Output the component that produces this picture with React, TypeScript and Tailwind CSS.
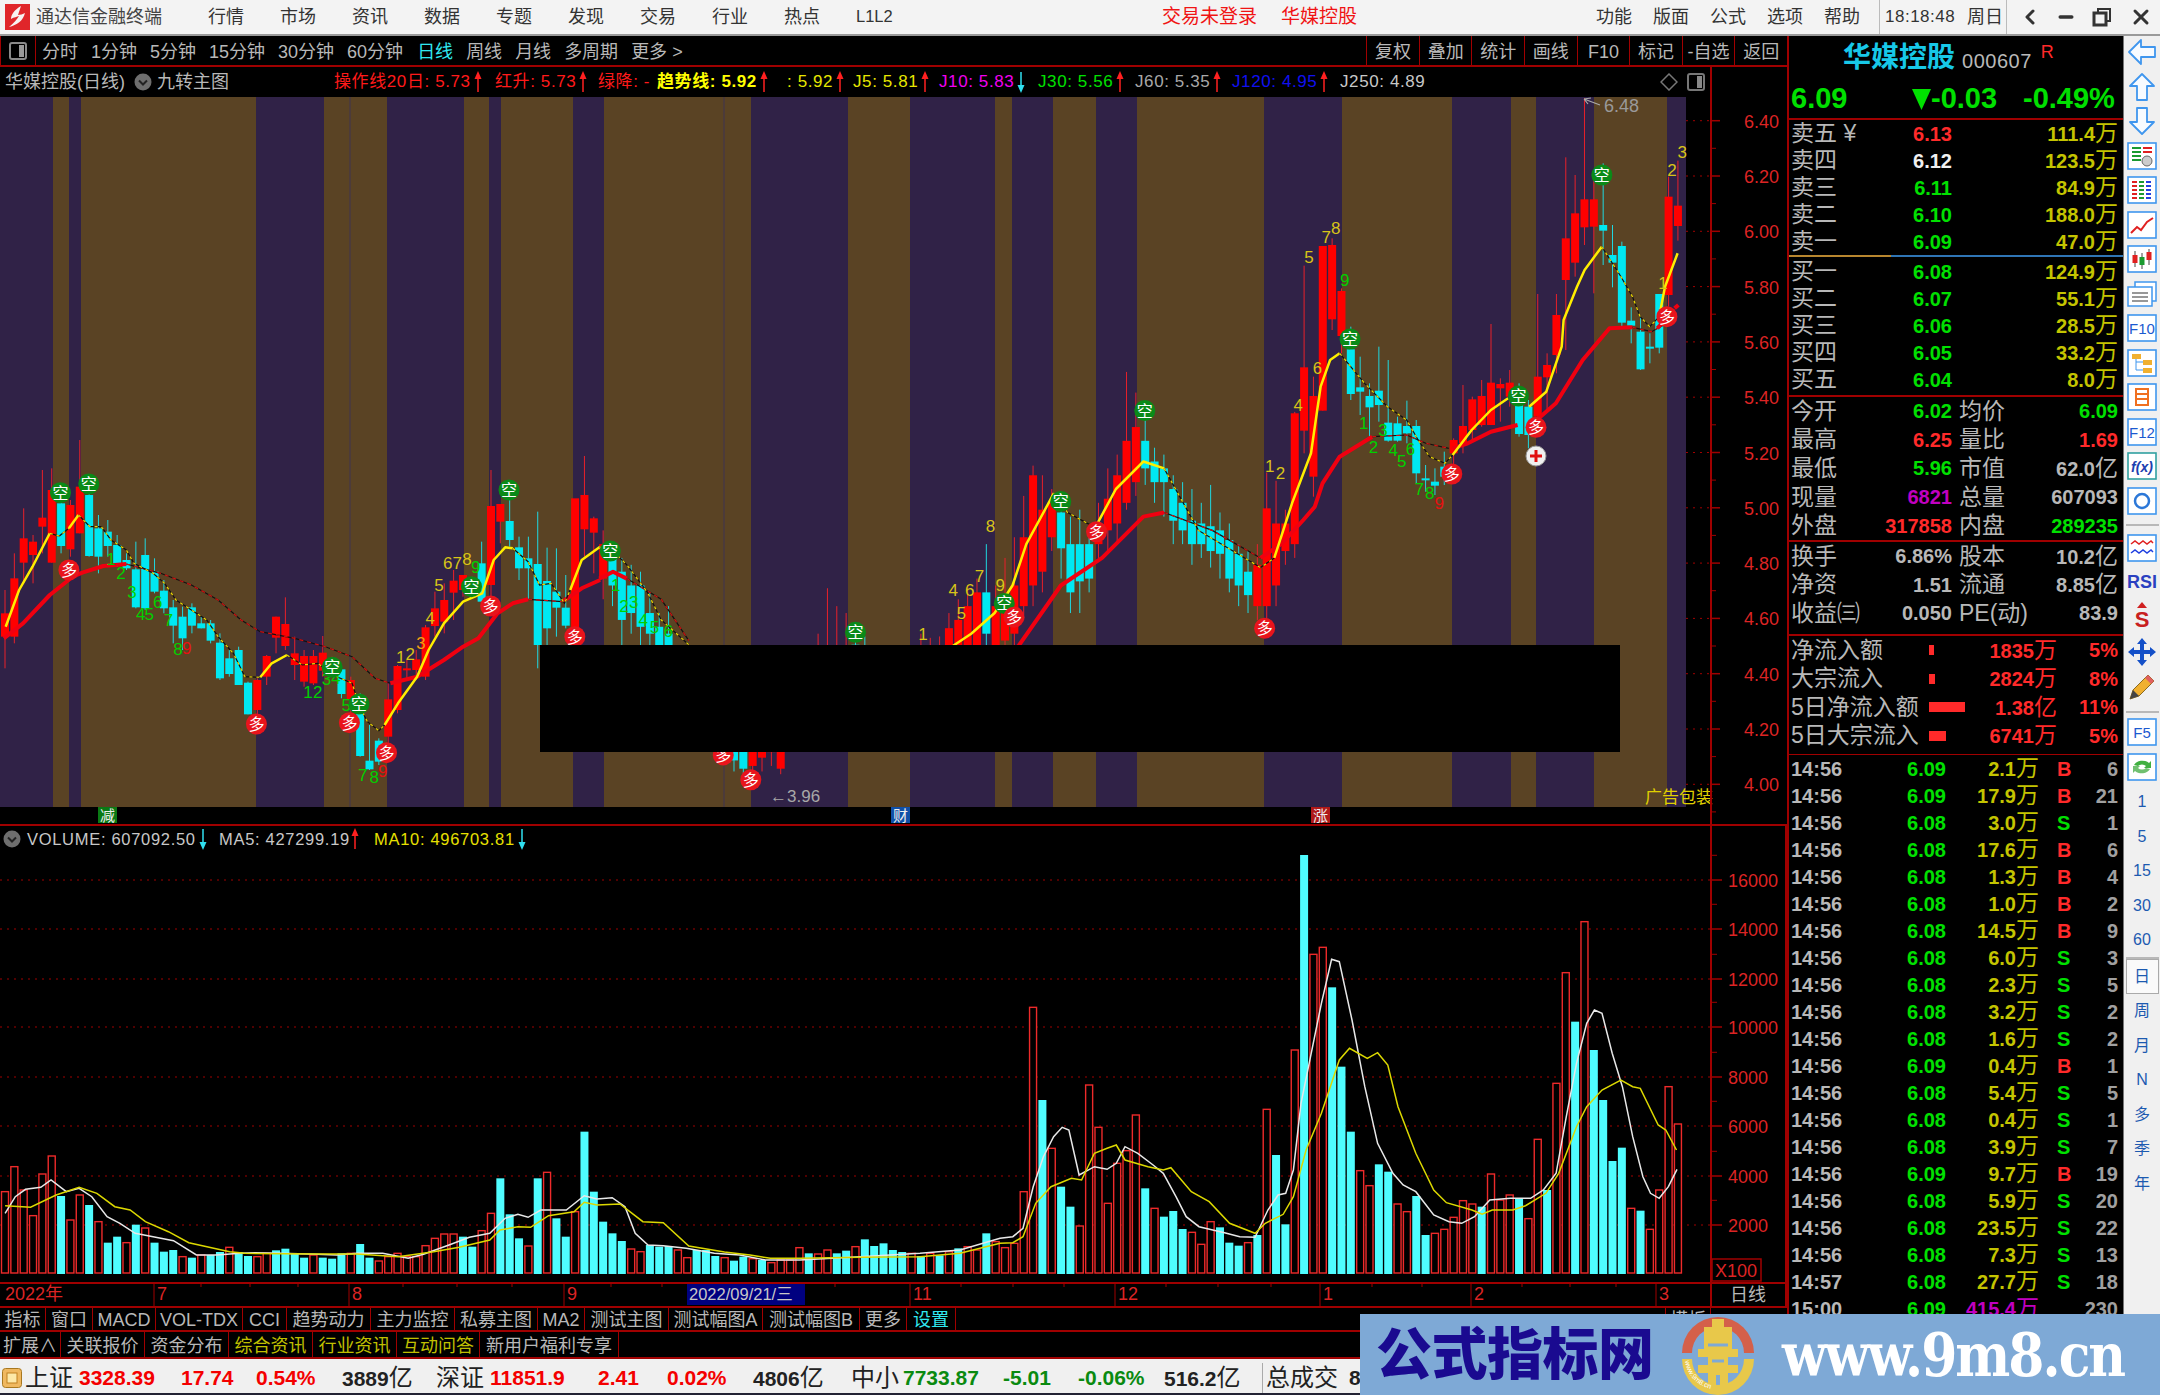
import { ChevronLeft, Minus, X } from "lucide-react";

const RED_LINE = "#a00000";

// chart readings, page pixels come from the helpers below
type Pt = [number, number];
const z8 = (pts: number[][]): Pt[] => pts.map(([x, p]) => [x / 2.613, 420 + p / 3]);
const z9 = (pts: number[][]): Pt[] => pts.map(([x, p]) => [1200 + x / 2.613, 120 + p / 3]);
const sm = (pts: number[][]): Pt[] => pts.map(([x, y]) => [x * 1.3776, y * 1.3776]);
const v12 = (pts: number[][]): Pt[] => pts.map(([x, p]) => [x / 1.96, 820 + p / 3]);
const v10 = (pts: number[][]): Pt[] => pts.map(([x, p]) => [1000 + x / 1.96, 820 + p / 3]);
const real = (pts: number[][]): Pt[] => pts.map(([x, p]) => [x, 820 + p / 3]);
const toPoints = (pts: Pt[]) => pts.map(([x, y]) => `${x.toFixed(1)},${y.toFixed(1)}`).join(" ");

const barX = (i: number) => 5 + 9.346 * i;
const priceY = (p: number) => 120.7 + (6.4 - p) * 276.5;

const BANDS: [number, number, boolean][] = [
  [0, 53, true], [53, 69, false], [69, 81, true], [81, 256, false], [256, 324, true], [324, 387, false],
  [387, 464, true], [464, 489, false], [489, 501, true], [501, 573, false], [573, 604, true], [604, 751, false],
  [751, 848, true], [848, 910, false], [910, 995, true], [995, 1012, false], [1012, 1053, true], [1053, 1096, false],
  [1096, 1137, true], [1137, 1264, false], [1264, 1342, true], [1342, 1452, false], [1452, 1511, true],
  [1511, 1536, false], [1536, 1594, true], [1594, 1667, false], [1667, 1686, true],
];

const CANDLES_A =
  "r510,580,650,745 r400,475,650,670 r265,355,428,490 r345,365,405,490 r150,293,320,400 r145,210,428,428 c190,250,378,400 r240,255,388,410 r60,200,340,340 c165,225,408,410 " +
  "c285,325,410,460 c300,335,378,410 c345,375,430,440 c400,420,445,450 c365,448,562,565 c355,405,565,570 c415,455,515,520 c480,512,565,580 c540,562,617,670 c560,590,655,690 " +
  "c550,562,617,640 c590,610,625,625 c600,610,662,670 c640,668,775,780 c690,715,762,770 c680,690,795,795 c785,788,883,883 r775,780,870,885 r705,708,770,795 r590,590,653,700 " +
  "r532,612,678,690 r650,700,735,780 r690,708,785,800 r690,708,790,795 r648,698,752,770 r710,745,760,770 c745,748,822,835 r770,780,840,880 c820,825,1008,1010 c915,1022,1048,1050 " +
  "c955,962,1025,1035 r790,838,950,970 r735,738,870,880 r720,745,750,775 r690,718,750,780 r615,622,770,780 r515,565,618,650 r490,540,605,640 r450,482,518,600 r465,465,510,530 " +
  "r470,480,510,530 c365,430,545,560 r150,258,495,540 r252,252,305,370 c180,303,360,380 c350,382,445,480 c350,415,445,540 c275,432,675,745 c383,483,625,680 c385,515,563,650 " +
  "c465,563,617,625 r300,235,640,650 r108,225,328,410 r290,295,338,460";
const CANDLES_M =
  "r385,395,420,435 c395,405,425,440 c405,415,450,470 c410,425,445,460 c415,425,455,470 c430,445,460,480 c445,455,475,490 c440,460,490,500 c470,480,500,510 c480,490,510,520 " +
  "c490,500,520,530 c495,505,530,540 r500,510,535,545 c500,520,550,555 c510,530,552,560 c515,535,558,568 r520,530,556,560 r520,532,550,560 r518,530,546,556 r510,525,558,562 " +
  "r490,510,530,540 r480,495,520,530 r470,480,510,520 r460,475,500,510 r427,470,495,505 r440,472,500,510 r445,472,490,500 c455,468,490,500 c462,475,500,510 c470,480,505,515 " +
  "c470,485,510,520 r470,490,510,520 c470,490,515,525 c470,495,520,530 r460,475,505,515 r463,475,500,510 r462,470,495,505 r445,456,482,490 r435,450,475,485 r425,440,480,490 " +
  "r420,430,470,480 c395,430,460,470 r425,440,470,480 r405,445,465,475 r390,425,460,470 r360,390,440,450 r338,345,425,440 r345,370,415,430 r355,365,390,400 c360,372,398,420 " +
  "c375,395,430,445 c370,395,422,445 c385,395,420,430 r365,380,395,405 r340,362,385,400 r330,345,380,395 r270,320,365,370 r285,310,350,360 c295,320,340,352 c325,335,350,365 " +
  "c330,340,350,375 c345,355,378,395 c350,365,385,395 c355,378,395,410 c365,380,395,405 c352,382,400,412 c372,385,402,420 c380,392,420,430 c395,402,425,440 c400,415,432,445 " +
  "r395,410,440,450 r343,369,440,456 r349,380,425,440 r370,380,400,410 r299,300,395,405";
const CANDLES_Z =
  "r437,742,932,1000 r770,828,1070,1130 r378,378,872,872 r355,375,598,630 r505,513,648,700 c620,688,822,840 c710,802,815,885 c790,828,862,950 c680,812,855,905 c720,908,962,965 " +
  "c890,910,962,965 c842,918,940,970 c900,918,1060,1090 c1035,1075,1080,1115 c1045,1085,1097,1125 c995,1040,1070,1095 r955,960,1000,1040 r795,918,970,1000 r830,838,930,960 r780,828,915,920 " +
  "r612,788,915,915 r775,792,805,905 r750,788,830,860 c790,838,942,950 c840,860,945,985 r522,770,890,900 r700,735,772,870 r522,585,705,760 r112,355,480,690 r165,280,428,470 " +
  "r-66,238,322,375 r180,238,320,520 c130,315,332,435 c315,405,428,502 c365,378,608,620 c562,602,617,670 c590,635,748,750 c640,680,685,730 c522,522,683,700 r170,230,525,560 r122,257,318,362";

const parseCandles = (src: string, conv: (v: number) => number) =>
  src.split(" ").map((t) => {
    const [h, o, c, l] = t.slice(1).split(",").map(Number);
    return { up: t[0] === "r", h: conv(h), t: conv(o), b: conv(c), l: conv(l) };
  });
const CANDLES = [
  ...parseCandles(CANDLES_A, (p) => 420 + p / 3),
  ...parseCandles(CANDLES_M, (s) => s * 1.3776),
  ...parseCandles(CANDLES_Z, (p) => 120 + p / 3),
];

const VOLS = (
  "r1115 r1040 r1110 r1187 r1062 r1008 c1128 r1200 r1125 c1155 r1205 c1268 c1250 r1268 c1214 r1224 c1268 c1295 c1290 r1310 " +
  "c1313 r1305 c1305 c1296 r1282 c1296 c1308 r1310 r1300 c1291 c1286 c1300 c1313 r1305 c1313 c1316 c1300 r1300 c1272 c1313 " +
  "r1323 r1310 r1300 r1310 r1310 r1277 r1255 r1242 r1242 c1250 c1280 r1232 r1180 c1075 c1183 c1255 r1278 c1075 r1057 c1195 " +
  "c1250 r1175 c935 c1115 c1205 c1240 c1263 r1287 r1295 c1275 c1280 c1278 r1290 r1313 c1290 c1290 c1308 r1313 c1322 c1310 " +
  "r1316 c1320 r1328 r1320 r1320 r1283 " +
  "c1300 r1302 r1290 c1300 c1292 r1280 c1258 c1278 c1270 c1290 c1296 r1300 c1308 r1300 c1306 r1295 c1285 r1280 r1290 c1240 r1265 " +
  "r1283 r1270 r1115 r562 c840 r985 c1100 c1160 r1218 r795 r922 r1150 r1030 r992 r885 c1105 r1165 c1190 c1173 c1227 " +
  "r1237 r1273 r1205 c1222 c1268 c1277 r1268 c1245 r868 c1005 c1213 r690 c105 r403 r382 c502 c740 c935 r1052 r1097 " +
  "c1033 c1055 r1152 r1175 c1128 c1245 r1240 r1228 r1192 r1142 r1152 c1160 r1062 r1140 r1125 c1135 r1196 r958 c1110 r790 " +
  "r458 c605 r305 c690 c840 c1023 c983 r1165 c1172 r1228 r1110 r800 r912"
).split(" ");

const WHITE: Pt[] = [
  ...v12([[10,1180],[30,1130],[50,1108],[80,1102],[100,1080],[130,1115],[155,1105],[180,1130],[210,1190],[235,1210],[265,1240],[300,1250],[340,1262],[385,1305],[425,1305],[470,1300],[500,1298],[550,1300],[620,1303],[660,1305],[700,1300],[750,1300],[800,1315],[830,1303],[880,1275],[920,1252],[960,1240],[990,1195],[1015,1183],[1035,1192],[1060,1170],[1110,1170],[1145,1127],[1170,1137],[1200,1133],[1225,1160],[1245,1240],[1270,1275],[1300,1277],[1345,1285],[1400,1300],[1450,1305],[1500,1320],[1568,1320]]),
  ...real([[860,1310],[920,1300],[960,1290]]),
  ...v10([[0,1255],[25,1250],[45,1225],[65,1100],[85,1010],[105,950],[122,922],[135,930],[155,1065],[185,1040],[210,1048],[228,1030],[245,980],[270,1000],[300,1035],[320,1060],[345,1130],[365,1190],[390,1220],[440,1238],[470,1250],[500,1252],[525,1170],[545,1125],[560,1120],[575,1050],[590,850],[610,700],[630,550],[650,418],[665,425],[690,600],[715,800],[740,970],[770,1060],[790,1095],[815,1115],[850,1185],[880,1205],[905,1210],[930,1190],[960,1140],[1000,1135],[1040,1135],[1065,1110],[1090,1060],[1110,890],[1130,730],[1150,610],[1165,570],[1180,580],[1200,700],[1220,800],[1240,950],[1260,1070],[1275,1120],[1292,1135],[1310,1100],[1327,1048]]),
];
const YELLOW_VOL: Pt[] = [
  ...v12([[10,1157],[60,1162],[110,1125],[155,1102],[190,1120],[225,1160],[255,1170],[285,1205],[330,1235],[370,1268],[410,1282],[450,1295],[480,1300],[620,1302],[700,1302],[780,1310],[850,1295],[900,1282],[960,1260],[980,1230],[1015,1220],[1040,1222],[1075,1187],[1125,1175],[1145,1147],[1170,1155],[1215,1152],[1260,1205],[1300,1208],[1350,1278],[1420,1296],[1470,1305],[1510,1315],[1568,1315]]),
  ...real([[860,1312],[920,1310],[960,1300]]),
  ...v10([[0,1270],[25,1268],[45,1250],[70,1150],[100,1100],[140,1075],[160,1080],[185,1000],[210,985],[228,975],[245,1020],[290,1040],[320,1050],[335,1043],[375,1115],[410,1145],[450,1210],[500,1240],[520,1210],[555,1183],[575,1130],[600,990],[630,880],[665,720],[685,685],[720,715],[740,698],[760,735],[780,860],[815,1000],[850,1110],[875,1148],[925,1170],[945,1183],[965,1170],[1005,1170],[1030,1157],[1070,1120],[1095,1060],[1130,920],[1150,860],[1180,810],[1217,780],[1240,800],[1255,805],[1290,915],[1305,930],[1326,990]]),
];

const MA_YELLOW: { pts: Pt[]; solid: boolean }[] = [
  { solid: true, pts: z8([[15,620],[50,510],[85,440],[130,340]]) },
  { solid: false, pts: z8([[130,340],[155,348],[180,325]]) },
  { solid: true, pts: z8([[180,325],[205,285]]) },
  { solid: false, pts: z8([[205,285],[235,320],[265,320],[290,360],[330,390],[350,430],[400,460],[430,490],[460,540],[500,570],[540,600],[570,650],[610,700],[640,770],[680,772]]) },
  { solid: true, pts: z8([[680,772],[710,730],[750,705]]) },
  { solid: false, pts: z8([[750,705],[790,735],[830,730],[880,770],[920,790],[940,860],[960,905],[990,932],[1005,915]]) },
  { solid: true, pts: z8([[1005,915],[1040,850],[1090,770],[1120,690],[1160,610],[1210,545],[1260,520],[1290,420],[1320,382],[1340,385]]) },
  { solid: false, pts: z8([[1340,385],[1380,425],[1410,495],[1440,490],[1475,550],[1490,510]]) },
  { solid: true, pts: z8([[1490,510],[1520,420],[1568,380]]) },
  { solid: false, pts: sm([[435,397],[445,400],[455,410],[470,430],[480,450],[500,468]]) },
  { solid: true, pts: sm([[690,470],[705,460],[722,445],[735,425],[745,395],[765,358]]) },
  { solid: false, pts: sm([[765,358],[775,372],[795,383]]) },
  { solid: true, pts: sm([[795,383],[810,355],[830,335],[845,340]]) },
  { solid: false, pts: sm([[845,340],[870,385],[895,400],[915,412],[925,405]]) },
  { solid: true, pts: [...sm([[925,405],[938,365]]), ...z9([[290,1000],[315,800],[340,720],[365,700]])] },
  { solid: false, pts: z9([[365,700],[430,790],[490,860],[540,900],[570,960],[600,1010],[640,1030],[660,1005]]) },
  { solid: true, pts: z9([[660,1005],[710,930],[760,870],[805,835]]) },
  { solid: true, pts: z9([[860,860],[905,815],[945,680],[950,600],[985,500],[1005,450],[1050,380]]) },
  { solid: false, pts: z9([[1050,380],[1100,470],[1130,530],[1150,590],[1175,620],[1200,590]]) },
  { solid: true, pts: z9([[1200,590],[1215,500],[1248,400]]) },
];
const MA_RED: { pts: Pt[]; solid: boolean }[] = [
  { solid: true, pts: z8([[10,655],[60,610],[130,525],[190,470],[215,458],[270,438],[330,432]]) },
  { solid: false, pts: z8([[330,432],[420,460],[500,495],[570,540],[630,600],[680,635],[770,655],[850,680],[920,710],[980,775],[1020,790]]) },
  { solid: true, pts: z8([[1020,790],[1090,770],[1160,720],[1210,680],[1250,655],[1300,580],[1340,550],[1380,538]]) },
  { solid: false, pts: z8([[1380,538],[1470,545]]) },
  { solid: true, pts: z8([[1470,545],[1520,505],[1568,480]]) },
  { solid: true, pts: sm([[435,420],[445,415],[455,420]]) },
  { solid: false, pts: sm([[455,420],[480,435],[500,465]]) },
  { solid: true, pts: sm([[690,480],[735,475],[770,425],[800,405],[830,375],[845,372]]) },
  { solid: false, pts: sm([[845,372],[880,385],[915,405]]) },
  { solid: true, pts: [...sm([[915,405],[930,395]]), ...z9([[270,1200],[300,1160],[320,1090],[365,1010],[450,950]])] },
  { solid: false, pts: z9([[450,950],[540,945],[590,970],[650,985]]) },
  { solid: true, pts: z9([[660,985],[700,970],[760,935],[830,915]]) },
  { solid: true, pts: z9([[885,895],[930,850],[1000,720],[1070,625],[1130,622]]) },
  { solid: false, pts: z9([[1130,622],[1180,635],[1220,610]]) },
  { solid: true, pts: z9([[1195,625],[1215,600]]) },
  { solid: true, pts: z9([[1240,565],[1250,555]]) },
];

const SIGNS_KONG: Pt[] = [
  ...z8([[158,218],[232,192],[868,742],[938,852],[1232,500],[1330,210]]),
  ...sm([[443,400],[621,459],[729,438],[770,364],[831,298]]),
  ...z9([[392,657],[832,828],[1050,165]]),
];
const SIGNS_DUO: Pt[] = [
  ...z8([[180,450],[670,912],[913,908],[1010,998],[1282,558],[1502,650]]),
  ...sm([[525,548],[545,566],[736,448],[796,386],[918,456]]),
  ...z9([[658,1062],[878,922],[1220,590]]),
];

const GREEN_N = "#00d000";
const YEL_N = "#d8c418";
const RED_N = "#e81010";
const COUNT_LABELS: [string, string, Pt[]][] = [
  ...(
    [
      ["1",290,418],["2",316,460],["3",345,517],["4",368,582],["5",390,582],["6",412,545],["7",440,600],["8",465,688],
      ["1",805,815],["2",830,815],["3",853,778],["4",878,775],["5",905,855],["7",948,1065],["8",978,1070],
    ] as [string, number, number][]
  ).map(([t, x, y]): [string, string, Pt[]] => [t, GREEN_N, z8([[x, y]])]),
  ["9", RED_N, z8([[488,683]])],
  ["9", RED_N, z8([[1000,1052]])],
  ...(
    [["1",1047,710],["2",1072,703],["4",1124,595],["5",1147,495],["6",1170,428],["7",1195,428],["8",1220,418]] as [string, number, number][]
  ).map(([t, x, y]): [string, string, Pt[]] => [t, YEL_N, z8([[x, y]])]),
  ["3", "#f0a010", z8([[1100,668]])],
  ["9", GREEN_N, z8([[1243,442]])],
  ...(
    [["1",447,425],["2",453,440],["3",460,437],["4",467,450],["5",475,455],["6",485,458]] as [string, number, number][]
  ).map(([t, x, y]): [string, string, Pt[]] => [t, GREEN_N, sm([[x, y]])]),
  ...(
    [["1",670,460],["4",692,428],["5",698,445],["6",704,428],["7",711,418],["8",719,382],["9",726,425]] as [string, number, number][]
  ).map(([t, x, y]): [string, string, Pt[]] => [t, YEL_N, sm([[x, y]])]),
  ...(
    [["1",182,1038],["2",210,1060],["4",257,855],["5",285,410],["6",307,745],["7",330,352],["8",355,325],["1",1210,490],["2",1233,150],["3",1260,97]] as [string, number, number][]
  ).map(([t, x, y]): [string, string, Pt[]] => [t, YEL_N, z9([[x, y]])]),
  ...(
    [["9",378,480],["1",428,908],["2",453,980],["3",478,930],["4",505,990],["5",527,1022],["6",550,988],["7",573,1108],["8",600,1118]] as [string, number, number][]
  ).map(([t, x, y]): [string, string, Pt[]] => [t, GREEN_N, z9([[x, y]])]),
  ["9", RED_N, z9([[625,1150]])],
];

function PriceChart() {
  const labels = [6.4, 6.2, 6.0, 5.8, 5.6, 5.4, 5.2, 5.0, 4.8, 4.6, 4.4, 4.2, 4.0];
  return (
    <svg width={1787} height={729} viewBox="0 97 1787 729" className="block shrink-0">
      <rect x={0} y={97} width={1787} height={729} fill="#000" />
      {BANDS.map(([a, b, purple]) => (
        <rect key={a} x={a} y={97} width={b - a} height={710} fill={purple ? "#302247" : "#5a4324"} />
      ))}
      <line x1={350} x2={350} y1={97} y2={807} stroke="#3f3550" strokeWidth={1} />
      <line x1={724} x2={724} y1={97} y2={807} stroke="#3f3550" strokeWidth={1} />

      {CANDLES.map((c, i) => {
        const x = barX(i);
        const col = c.up ? "#ff0000" : "#00e8f2";
        return (
          <g key={i}>
            <line x1={x} x2={x} y1={c.h} y2={c.l} stroke={c.up ? "#e8202a" : "#1fd8e0"} strokeWidth={1} />
            <rect x={x - 4} y={c.t} width={8} height={Math.max(c.b - c.t, 2)} fill={col} />
          </g>
        );
      })}

      {MA_RED.map((s, i) =>
        s.solid ? (
          <polyline key={i} points={toPoints(s.pts)} fill="none" stroke="#f00010" strokeWidth={4} strokeLinejoin="round" />
        ) : (
          <g key={i}>
            <polyline points={toPoints(s.pts)} fill="none" stroke="#111" strokeWidth={1.2} />
            <polyline points={toPoints(s.pts)} fill="none" stroke="#d01010" strokeWidth={1.2} strokeDasharray="4 4" />
          </g>
        )
      )}
      {MA_YELLOW.map((s, i) =>
        s.solid ? (
          <polyline key={i} points={toPoints(s.pts)} fill="none" stroke="#ffee00" strokeWidth={2.5} strokeLinejoin="round" />
        ) : (
          <g key={i}>
            <polyline points={toPoints(s.pts)} fill="none" stroke="#111" strokeWidth={1.2} />
            <polyline points={toPoints(s.pts)} fill="none" stroke="#f0dc00" strokeWidth={1.2} strokeDasharray="3 4" />
          </g>
        )
      )}

      {COUNT_LABELS.map(([t, color, [[x, y]]], i) => (
        <text key={i} x={x} y={y + 6} fontSize={17} fill={color} textAnchor="middle">
          {t}
        </text>
      ))}

      {SIGNS_KONG.map(([x, y], i) => (
        <g key={i}>
          <circle cx={x} cy={y} r={10.5} fill="#0a8a18" />
          <text x={x} y={y + 6} fontSize={16} fill="#fff" textAnchor="middle">空</text>
        </g>
      ))}
      {SIGNS_DUO.map(([x, y], i) => (
        <g key={i}>
          <circle cx={x} cy={y} r={10.5} fill="#e8141c" />
          <text x={x} y={y + 6} fontSize={16} fill="#fff" textAnchor="middle">多</text>
        </g>
      ))}
      {/* plus marker */}
      <circle cx={1536} cy={456} r={10} fill="#f0f0f0" stroke="#999" />
      <path d="M1536 450v12M1530 456h12" stroke="#e01010" strokeWidth={3} />

      <path d="M1584 99L1600 105M1584 99L1591 98M1584 99L1588 104" stroke="#aaa" fill="none" strokeWidth={1.2} />
      <text x={1604} y={112} fontSize={18} fill="#9a9a9a">6.48</text>
      <text x={770} y={802} fontSize={17} fill="#a8a8a8">←3.96</text>

      {/* the black patch that covers the middle of the chart */}
      <rect x={540} y={645} width={1080} height={107} fill="#000" />

      <text x={1645} y={803} fontSize={17} fill="#e0d000">广告包装</text>

      {/* bottom event markers */}
      <rect x={98} y={807} width={19} height={16} fill="#0a7a14" />
      <text x={107.5} y={821} fontSize={15} fill="#eee" textAnchor="middle">减</text>
      <rect x={891} y={807} width={19} height={16} fill="#1050a8" />
      <text x={900.5} y={821} fontSize={15} fill="#eee" textAnchor="middle">财</text>
      <rect x={1311} y={807} width={19} height={16} fill="#b01818" />
      <text x={1320.5} y={821} fontSize={15} fill="#eee" textAnchor="middle">涨</text>

      {/* price axis */}
      <line x1={1711} x2={1711} y1={97} y2={826} stroke={RED_LINE} strokeWidth={2} />
      <line x1={0} x2={1787} y1={825} y2={825} stroke={RED_LINE} strokeWidth={2} />
      {labels.map((p) => {
        const y = priceY(p);
        return (
          <g key={p}>
            <line x1={1686} x2={1711} y1={y} y2={y} stroke={RED_LINE} strokeDasharray="2 5" />
            <line x1={1711} x2={1720} y1={y} y2={y} stroke={RED_LINE} strokeWidth={1.5} />
            <line x1={1711} x2={1716} y1={y + 27.6} y2={y + 27.6} stroke={RED_LINE} />
            <text x={1744} y={y + 7} fontSize={18} fill="#dc2424">{p.toFixed(2)}</text>
          </g>
        );
      })}
    </svg>
  );
}

function VolumeChart() {
  const grid = [16000, 14000, 12000, 10000, 8000, 6000, 4000, 2000];
  const ys = [880, 929, 979, 1027, 1077, 1126, 1176, 1225];
  return (
    <div className="relative h-[456px] w-[1787px] shrink-0">
      <svg width={1787} height={456} viewBox="0 826 1787 456" className="block">
        {ys.map((y, i) => (
          <g key={y}>
            <line x1={0} x2={1711} y1={y} y2={y} stroke={RED_LINE} strokeDasharray="2 5" />
            <line x1={1711} x2={1722} y1={y} y2={y} stroke={RED_LINE} strokeWidth={1.5} />
            <line x1={1711} x2={1717} y1={y - 24.7} y2={y - 24.7} stroke={RED_LINE} />
            <text x={1728} y={y + 7} fontSize={18} fill="#dc2424">{grid[i]}</text>
          </g>
        ))}
        {VOLS.map((t, i) => {
          const x = barX(i);
          const top = 820 + Number(t.slice(1)) / 3;
          return t[0] === "r" ? (
            <rect key={i} x={x - 3.5} y={top} width={7} height={1273 - top} fill="#000" stroke="#ee2a2a" strokeWidth={1.4} />
          ) : (
            <rect key={i} x={x - 4} y={top} width={8} height={1274 - top} fill="#4ffdff" />
          );
        })}
        <polyline points={toPoints(WHITE)} fill="none" stroke="#e8e8e8" strokeWidth={1.5} />
        <polyline points={toPoints(YELLOW_VOL)} fill="none" stroke="#dcd800" strokeWidth={1.5} />
        <line x1={1711} x2={1711} y1={826} y2={1282} stroke={RED_LINE} strokeWidth={2} />
        <line x1={1786} x2={1786} y1={826} y2={1282} stroke={RED_LINE} strokeWidth={2} />
        <rect x={1712} y={1259} width={49} height={22} fill="none" stroke={RED_LINE} strokeWidth={1.5} />
        <text x={1715} y={1277} fontSize={18} fill="#dc2424">X100</text>
      </svg>
      {/* legend sits over the plot */}
      <div className="absolute left-[3px] top-[3px] flex h-[20px] items-center text-[16.5px] tracking-[0.7px]">
        <GrayCircle />
        <span className="ml-[6px] w-[172px] whitespace-nowrap text-[#c8c8c8]">VOLUME: 607092.50</span>
        <ArrowDown />
        <span className="ml-[12px] w-[132px] whitespace-nowrap text-[#c8c8c8]">MA5: 427299.19</span>
        <ArrowUp />
        <span className="ml-[15px] w-[144px] whitespace-nowrap text-[#e8e000]">MA10: 496703.81</span>
        <ArrowDown />
      </div>
    </div>
  );
}

function DateRow() {
  const months: [number, string][] = [[154, "7"], [349, "8"], [564, "9"], [910, "11"], [1115, "12"], [1320, "1"], [1471, "2"], [1656, "3"]];
  const ticks = [201, 250, 298, 403, 457, 512, 611, 662, 835, 961, 1013, 1064, 1166, 1218, 1271, 1372, 1422, 1522, 1570, 1616];
  return (
    <svg width={1787} height={24} viewBox="0 1282 1787 24" className="block shrink-0">
      <line x1={0} x2={1787} y1={1283} y2={1283} stroke={RED_LINE} strokeWidth={2} />
      <text x={5} y={1300} fontSize={18} fill="#dc2424">2022年</text>
      {ticks.map((x) => (
        <line key={x} x1={x} x2={x} y1={1283} y2={1287} stroke={RED_LINE} />
      ))}
      {months.map(([x, t]) => (
        <g key={x}>
          <line x1={x} x2={x} y1={1283} y2={1306} stroke={RED_LINE} />
          <text x={x + 3} y={1300} fontSize={18} fill="#dc2424">{t}</text>
        </g>
      ))}
      <rect x={687} y={1284} width={118} height={21} fill="#000080" />
      <text x={689} y={1300} fontSize={16.5} fill="#c8c8c8">2022/09/21/三</text>
      <line x1={1711} x2={1711} y1={1283} y2={1306} stroke={RED_LINE} strokeWidth={2} />
      <line x1={1786} x2={1786} y1={1283} y2={1306} stroke={RED_LINE} strokeWidth={2} />
      <text x={1730} y={1301} fontSize={18} fill="#b8b8b8">日线</text>
    </svg>
  );
}

function ArrowUp() {
  return (
    <svg width={8} height={24} viewBox="0 0 8 24" className="shrink-0">
      <path d="M4 4V22" stroke="#ff2020" strokeWidth={1.5} />
      <path d="M0.5 9L4 1L7.5 9Z" fill="#ff2020" />
    </svg>
  );
}
function ArrowDown() {
  return (
    <svg width={8} height={24} viewBox="0 0 8 24" className="shrink-0">
      <path d="M4 2V20" stroke="#30e0f0" strokeWidth={1.5} />
      <path d="M0.5 15L4 23L7.5 15Z" fill="#30e0f0" />
    </svg>
  );
}
function GrayCircle() {
  return (
    <svg width={18} height={18} viewBox="0 0 18 18" className="shrink-0">
      <circle cx={9} cy={9} r={8.5} fill="#6e6e6e" />
      <path d="M5 7.5L9 11.5L13 7.5" stroke="#222" strokeWidth={2} fill="none" />
    </svg>
  );
}

function TopBar() {
  const nav = ["行情", "市场", "资讯", "数据", "专题", "发现", "交易", "行业", "热点", "L1L2"];
  const right = ["功能", "版面", "公式", "选项", "帮助"];
  return (
    <div className="flex h-[36px] shrink-0 items-center whitespace-nowrap border-b-2 border-[#9a9a9a] bg-[#f3f3f3] text-[18px] text-[#333]">
      <svg width={25} height={26} viewBox="0 0 25 26" className="ml-[5px] shrink-0">
        <rect width={25} height={26} fill="#e0262a" />
        <path d="M16 2C9 6 6 11 6 15c3-2 6-2 8-3-2 3-5 7-10 11 8-2 14-6 16-14-2 1-5 2-7 2 1-3 2-6 3-9Z" fill="#f7f2f2" />
      </svg>
      <span className="ml-[6px] w-[126px] text-[#444]">通达信金融终端</span>
      <div className="ml-[46px] flex w-[683px] shrink-0 gap-[36px]">
        {nav.map((n) => (
          <span key={n} className={`shrink-0 ${n === "L1L2" ? "text-[16.5px]" : ""}`}>{n}</span>
        ))}
      </div>
      <span className="ml-[271px] w-[95px] text-[19px] text-[#f01414]">交易未登录</span>
      <span className="ml-[24px] w-[76px] text-[19px] text-[#f01414]">华媒控股</span>
      <div className="ml-[239px] flex gap-[21px]">
        {right.map((n) => (
          <span key={n}>{n}</span>
        ))}
      </div>
      <div className="ml-[19px] flex h-full items-center border-x border-[#bbb] pl-[5px] pr-[3px]">
        <span className="w-[82px] text-[17px] tracking-[0.5px]">18:18:48</span>
        <span>周日</span>
      </div>
      <ChevronLeft size={24} strokeWidth={3} className="ml-[11px] text-[#333]" />
      <Minus size={20} strokeWidth={4} className="ml-[14px] text-[#333]" />
      <svg width={20} height={20} viewBox="0 0 20 20" className="ml-[16px] shrink-0">
        <rect x={2} y={6} width={12} height={12} fill="none" stroke="#333" strokeWidth={3} />
        <path d="M6 5V2H18V14H15" fill="none" stroke="#333" strokeWidth={2} />
      </svg>
      <X size={24} strokeWidth={3} className="ml-[17px] text-[#333]" />
    </div>
  );
}

function PeriodBar() {
  const periods = ["分时", "1分钟", "5分钟", "15分钟", "30分钟", "60分钟"];
  const after = ["周线", "月线", "多周期"];
  const buttons = ["复权", "叠加", "统计", "画线", "F10", "标记", "-自选", "返回"];
  return (
    <div className="flex h-[31px] shrink-0 items-center border-b-2 border-[#a00000] text-[18px] text-[#b8b8b8]">
      <div className="flex h-full w-[36px] items-center justify-center border-r border-l border-[#a00000]">
        <svg width={18} height={18} viewBox="0 0 18 18">
          <rect x={1} y={1} width={16} height={16} rx={2} fill="none" stroke="#8a8a8a" strokeWidth={2} />
          <rect x={10} y={3} width={5} height={12} fill="#999" />
        </svg>
      </div>
      <div className="ml-[6px] flex items-center gap-[13px] pt-[3px]">
        {periods.map((p) => (
          <span key={p}>{p}</span>
        ))}
        <span className="ml-[1px] text-[#30e8f0]">日线</span>
        {after.map((p) => (
          <span key={p}>{p}</span>
        ))}
        <span>更多 &gt;</span>
      </div>
      <div className="ml-auto flex h-full">
        {buttons.map((b) => (
          <span key={b} className="flex h-full w-[52.6px] items-center justify-center border-l border-[#a00000] pt-[3px]">
            {b}
          </span>
        ))}
      </div>
    </div>
  );
}

function InfoRow() {
  const items = [
    { t: "操作线20日: 5.73", c: "text-[#ff1a1a]", w: "w-[161px]", a: "up" },
    { t: "红升: 5.73", c: "text-[#ff1a1a]", w: "w-[103px]", a: "up" },
    { t: "绿降: -", c: "text-[#ff1a1a]", w: "w-[59px]", a: "" },
    { t: "趋势线: 5.92", c: "text-[#ffff00] font-bold", w: "w-[130px]", a: "up" },
    { t: ": 5.92", c: "text-[#e6e600]", w: "w-[66px]", a: "up" },
    { t: "J5: 5.81", c: "text-[#e6e600]", w: "w-[86px]", a: "up" },
    { t: "J10: 5.83", c: "text-[#f000f0]", w: "w-[99px]", a: "down" },
    { t: "J30: 5.56", c: "text-[#00e000]", w: "w-[97px]", a: "up" },
    { t: "J60: 5.35", c: "text-[#a8a8a8]", w: "w-[97px]", a: "up" },
    { t: "J120: 4.95", c: "text-[#1010f0]", w: "w-[108px]", a: "up" },
    { t: "J250: 4.89", c: "text-[#c8c8c8]", w: "w-[95px]", a: "" },
  ];
  return (
    <div className="flex h-[30px] w-[1712px] shrink-0 items-center border-r-2 border-[#a00000] text-[17px] text-[#b8b8b8]">
      <span className="ml-[5px] w-[129px] text-[18px]">华媒控股(日线)</span>
      <GrayCircle />
      <span className="ml-[5px] w-[177px] text-[18px]">九转主图</span>
      {items.map((it) => (
        <div key={it.t} className={`flex items-center gap-[3px] tracking-[0.6px] ${it.w}`}>
          <span className={`whitespace-nowrap ${it.c}`}>{it.t}</span>
          {it.a === "up" && <ArrowUp />}
          {it.a === "down" && <ArrowDown />}
        </div>
      ))}
      <svg width={18} height={18} viewBox="0 0 18 18" className="ml-[225px] shrink-0">
        <path d="M9 1L17 9L9 17L1 9Z" fill="none" stroke="#777" strokeWidth={1.5} />
      </svg>
      <svg width={18} height={18} viewBox="0 0 18 18" className="ml-[9px] shrink-0">
        <rect x={1} y={1} width={16} height={16} rx={2} fill="none" stroke="#777" strokeWidth={2} />
        <rect x={10} y={3} width={5} height={12} fill="#888" />
      </svg>
    </div>
  );
}

function TabRows() {
  const row1 = [
    { t: "指标", w: "w-[46px]" }, { t: "窗口", w: "w-[47px]" }, { t: "MACD", w: "w-[63px]" }, { t: "VOL-TDX", w: "w-[87px]" },
    { t: "CCI", w: "w-[44px]" }, { t: "趋势动力", w: "w-[84px]" }, { t: "主力监控", w: "w-[84px]" }, { t: "私募主图", w: "w-[83px]" },
    { t: "MA2", w: "w-[47px]" }, { t: "测试主图", w: "w-[84px]" }, { t: "测试幅图A", w: "w-[94px]" }, { t: "测试幅图B", w: "w-[97px]" },
    { t: "更多", w: "w-[47px]" }, { t: "设置", w: "w-[49px] text-[#30e8f0]" },
  ];
  const row2 = [
    { t: "扩展∧", w: "w-[61px]" }, { t: "关联报价", w: "w-[84px]" }, { t: "资金分布", w: "w-[84px]" },
    { t: "综合资讯", w: "w-[84px] text-[#c0c000]" }, { t: "行业资讯", w: "w-[84px] text-[#c0c000]" }, { t: "互动问答", w: "w-[83px] text-[#c0c000]" },
    { t: "新用户福利专享", w: "w-[139px]" },
  ];
  return (
    <div className="shrink-0 text-[18px] text-[#b8b8b8]">
      <div className="flex h-[26px] items-stretch border-y-2 border-[#a00000]">
        {row1.map((c) => (
          <span key={c.t} className={`flex items-center justify-center whitespace-nowrap border-r border-[#a00000] pt-[3px] ${c.w}`}>
            {c.t}
          </span>
        ))}
        <span className="ml-[709px] flex w-[46px] items-center justify-center border-x border-[#a00000] pt-[3px]">模板</span>
      </div>
      <div className="flex h-[27px] items-stretch border-b-2 border-[#a00000]">
        {row2.map((c) => (
          <span key={c.t} className={`flex items-center justify-center whitespace-nowrap border-r border-[#a00000] pt-[4px] ${c.w}`}>
            {c.t}
          </span>
        ))}
      </div>
    </div>
  );
}

const Wan = ({ unit = "万" }: { unit?: string }) => <span className="text-[23px] font-normal">{unit}</span>;

function OrderRow({ label, price, priceClass, vol }: { label: string; price: string; priceClass: string; vol: string }) {
  return (
    <div className="grid h-[27px] grid-cols-[115px_46px_1fr] items-center leading-none">
      <span className="whitespace-nowrap text-[23px] text-[#b8b8b8]">{label}</span>
      <span className={`text-right text-[20px] font-bold ${priceClass}`}>{price}</span>
      <span className="whitespace-nowrap text-right text-[20px] font-bold text-[#c4c400]">
        {vol}
        <Wan />
      </span>
    </div>
  );
}

function StatRow({ a, av, ac, b, bv, bc, unit }: { a: string; av: string; ac: string; b: string; bv: string; bc: string; unit?: string }) {
  return (
    <div className="grid h-[28.6px] grid-cols-[161px_1fr] items-center leading-none">
      <div className="flex items-center justify-between">
        <span className="whitespace-nowrap text-[23px] text-[#b8b8b8]">{a}</span>
        <span className={`text-[20px] font-bold ${ac}`}>{av}</span>
      </div>
      <div className="flex items-center justify-between pl-[7px]">
        <span className="whitespace-nowrap text-[23px] text-[#b8b8b8]">{b}</span>
        <span className={`whitespace-nowrap text-[20px] font-bold ${bc}`}>
          {bv}
          {unit && <Wan unit={unit} />}
        </span>
      </div>
    </div>
  );
}

const TICKS: [string, string, string, string, string][] = [
  ["14:56", "6.09", "2.1", "B", "6"], ["14:56", "6.09", "17.9", "B", "21"], ["14:56", "6.08", "3.0", "S", "1"],
  ["14:56", "6.08", "17.6", "B", "6"], ["14:56", "6.08", "1.3", "B", "4"], ["14:56", "6.08", "1.0", "B", "2"],
  ["14:56", "6.08", "14.5", "B", "9"], ["14:56", "6.08", "6.0", "S", "3"], ["14:56", "6.08", "2.3", "S", "5"],
  ["14:56", "6.08", "3.2", "S", "2"], ["14:56", "6.08", "1.6", "S", "2"], ["14:56", "6.09", "0.4", "B", "1"],
  ["14:56", "6.08", "5.4", "S", "5"], ["14:56", "6.08", "0.4", "S", "1"], ["14:56", "6.08", "3.9", "S", "7"],
  ["14:56", "6.09", "9.7", "B", "19"], ["14:56", "6.08", "5.9", "S", "20"], ["14:56", "6.08", "23.5", "S", "22"],
  ["14:56", "6.08", "7.3", "S", "13"], ["14:57", "6.08", "27.7", "S", "18"], ["15:00", "6.09", "415.4", "", "230"],
];

function RightPanel() {
  const GREEN = "text-[#00e000]";
  const RED = "text-[#ff2a2a]";
  const GRAY = "text-[#b8b8b8]";
  return (
    <div className="h-full w-[336px] shrink-0 overflow-hidden border-l-2 border-[#a00000] pl-[2px] pr-[5px]">
      <div className="-mr-[5px] -ml-[2px] border-b-2 border-[#a00000] pl-[2px] pr-[5px]">
        <div className="flex h-[44px] items-center pl-[52px]">
          <span className="text-[28px] font-bold leading-none text-[#17c8e8]">华媒控股</span>
          <span className="ml-[7px] mt-[6px] text-[20px] tracking-[0.5px] text-[#b8b8b8]">000607</span>
          <span className="ml-[9px] -mt-[12px] text-[18px] text-[#ff2a2a]">R</span>
        </div>
        <div className="flex h-[38px] items-center text-[29px] font-bold text-[#00e000]">
          <span className="w-[121px]">6.09</span>
          <svg width={19} height={21} viewBox="0 0 19 21" className="shrink-0">
            <path d="M0 0H19L9.5 21Z" fill="#00e000" />
          </svg>
          <span className="w-[92px] whitespace-nowrap">-0.03</span>
          <span className="whitespace-nowrap">-0.49%</span>
        </div>
      </div>

      <div className="h-[135px]">
        <OrderRow label="卖五 ¥" price="6.13" priceClass={RED} vol="111.4" />
        <OrderRow label="卖四" price="6.12" priceClass="text-[#f0f0f0]" vol="123.5" />
        <OrderRow label="卖三" price="6.11" priceClass={GREEN} vol="84.9" />
        <OrderRow label="卖二" price="6.10" priceClass={GREEN} vol="188.0" />
        <OrderRow label="卖一" price="6.09" priceClass={GREEN} vol="47.0" />
      </div>
      <div className="-ml-[2px] -mr-[5px] flex h-[2px]">
        <div className="w-[102px] bg-[#b8862f]" />
        <div className="flex-1 bg-[#2f75b5]" />
      </div>
      <div className="h-[138px] pt-[1px]">
        <OrderRow label="买一" price="6.08" priceClass={GREEN} vol="124.9" />
        <OrderRow label="买二" price="6.07" priceClass={GREEN} vol="55.1" />
        <OrderRow label="买三" price="6.06" priceClass={GREEN} vol="28.5" />
        <OrderRow label="买四" price="6.05" priceClass={GREEN} vol="33.2" />
        <OrderRow label="买五" price="6.04" priceClass={GREEN} vol="8.0" />
      </div>

      <div className="-mx-[7px] h-[2px] bg-[#a00000]" />
      <div className="h-[143px]">
        <StatRow a="今开" av="6.02" ac={GREEN} b="均价" bv="6.09" bc={GREEN} />
        <StatRow a="最高" av="6.25" ac={RED} b="量比" bv="1.69" bc={RED} />
        <StatRow a="最低" av="5.96" ac={GREEN} b="市值" bv="62.0" bc={GRAY} unit="亿" />
        <StatRow a="现量" av="6821" ac="text-[#c000c0]" b="总量" bv="607093" bc={GRAY} />
        <StatRow a="外盘" av="317858" ac={RED} b="内盘" bv="289235" bc={GREEN} />
      </div>
      <div className="-mx-[7px] h-[2px] bg-[#a00000]" />
      <div className="h-[92px]">
        <StatRow a="换手" av="6.86%" ac={GRAY} b="股本" bv="10.2" bc={GRAY} unit="亿" />
        <StatRow a="净资" av="1.51" ac={GRAY} b="流通" bv="8.85" bc={GRAY} unit="亿" />
        <StatRow a="收益㈢" av="0.050" ac={GRAY} b="PE(动)" bv="83.9" bc={GRAY} />
      </div>
      <div className="-mx-[7px] h-[2px] bg-[#a00000]" />
      <div className="h-[118px]">
        {[
          { l: "净流入额", bar: "w-[5px]", v: "1835", u: "万", p: "5%" },
          { l: "大宗流入", bar: "w-[6px]", v: "2824", u: "万", p: "8%" },
          { l: "5日净流入额", bar: "w-[36px]", v: "1.38", u: "亿", p: "11%" },
          { l: "5日大宗流入", bar: "w-[17px]", v: "6741", u: "万", p: "5%" },
        ].map((r) => (
          <div key={r.l} className="grid h-[28.5px] grid-cols-[138px_128px_1fr] items-center leading-none">
            <span className="whitespace-nowrap text-[23px] text-[#b8b8b8]">{r.l}</span>
            <div className="flex items-center justify-between">
              <div className={`h-[10px] bg-[#ff2a2a] ${r.bar}`} />
              <span className="whitespace-nowrap text-[20px] font-bold text-[#ff2a2a]">
                {r.v}
                <Wan unit={r.u} />
              </span>
            </div>
            <span className="text-right text-[20px] font-bold text-[#ff2a2a]">{r.p}</span>
          </div>
        ))}
      </div>
      <div className="-mx-[7px] h-[1px] bg-[#a00000]" />
      <div>
        {TICKS.map((t, i) => (
          <div key={i} className="grid h-[27px] grid-cols-[70px_85px_93px_18px_20px_1fr] items-center text-[20px] font-bold leading-none">
            <span className={GRAY}>{t[0]}</span>
            <span className={`text-right ${GREEN}`}>{t[1]}</span>
            <span className={`whitespace-nowrap text-right ${t[4] === "230" ? "text-[#c000c0]" : "text-[#c4c400]"}`}>
              {t[2]}
              <Wan />
            </span>
            <span />
            <span className={t[3] === "B" ? RED : GREEN}>{t[3]}</span>
            <span className="text-right text-[#a0a0a0]">{t[4]}</span>
          </div>
        ))}
      </div>
    </div>
  );
}

function Frame({ children, stroke = "#3f96ee" }: { children: React.ReactNode; stroke?: string }) {
  return (
    <svg width={30} height={28} viewBox="0 0 30 28">
      <rect x={1} y={1} width={28} height={26} fill="#fff" stroke={stroke} strokeWidth={1.6} />
      {children}
    </svg>
  );
}

function BlockArrow({ rotate }: { rotate: number }) {
  return (
    <svg width={30} height={30} viewBox="0 0 30 30">
      <path
        d="M15 2L27 14H20V28H10V14H3Z"
        transform={`rotate(${rotate} 15 15)`}
        fill="#f7fbff"
        stroke="#3f96ee"
        strokeWidth={1.8}
        strokeLinejoin="round"
      />
    </svg>
  );
}

function ToolColumn() {
  const lines = (cols: string[]) =>
    cols.map((c, i) => (
      <g key={i}>
        <path d={`M${5 + i * 7} 6h5M${5 + i * 7} 10h5M${5 + i * 7} 14h5M${5 + i * 7} 18h5M${5 + i * 7} 22h5`} stroke={c} strokeWidth={2} />
      </g>
    ));
  const group1 = [
    <BlockArrow key="l" rotate={-90} />,
    <BlockArrow key="u" rotate={0} />,
    <BlockArrow key="d" rotate={180} />,
    <Frame key="tc">
      <path d="M5 6h9M5 10h9M5 14h9M5 18h9" stroke="#1a9a30" strokeWidth={2} />
      <path d="M16 6h9M16 10h9" stroke="#e02020" strokeWidth={2} />
      <circle cx={20} cy={19} r={5} fill="#ccc" stroke="#666" />
    </Frame>,
    <Frame key="ct">{lines(["#e02020", "#1a9a30", "#2040e0"])}</Frame>,
    <Frame key="lc">
      <path d="M4 22L10 16L14 19L20 11L26 7" stroke="#e02020" strokeWidth={2} fill="none" />
    </Frame>,
    <Frame key="cd">
      <path d="M8 6V22M15 8V24M22 4V20" stroke="#444" />
      <rect x={5.5} y={10} width={5} height={8} fill="#e02020" />
      <rect x={12.5} y={12} width={5} height={8} fill="#1a9a30" />
      <rect x={19.5} y={7} width={5} height={8} fill="#e02020" />
    </Frame>,
    <svg key="st" width={32} height={28} viewBox="0 0 32 28">
      <rect x={9} y={2} width={21} height={19} fill="#fff" stroke="#3f96ee" strokeWidth={1.5} />
      <rect x={2} y={7} width={24} height={19} fill="#fff" stroke="#3f96ee" strokeWidth={1.5} />
      <path d="M6 13h16M6 17h16M6 21h16" stroke="#777" strokeWidth={1.5} />
    </svg>,
    <Frame key="f10">
      <text x={15} y={20} fontSize={15} fill="#1c5ad0" textAnchor="middle">F10</text>
    </Frame>,
    <Frame key="tr">
      <rect x={5} y={5} width={9} height={5} fill="#f0b030" />
      <rect x={16} y={11} width={9} height={5} fill="#f0b030" />
      <rect x={16} y={19} width={9} height={5} fill="#f0b030" />
      <path d="M9 10V21H16M9 13H16" stroke="#3f96ee" fill="none" />
    </Frame>,
    <Frame key="or">
      <path d="M9 6H21V22H9ZM9 11H21M9 16H21" stroke="#f07020" strokeWidth={2} fill="none" />
    </Frame>,
    <Frame key="f12">
      <text x={15} y={20} fontSize={15} fill="#1c5ad0" textAnchor="middle">F12</text>
    </Frame>,
    <Frame key="fx" stroke="#30a0a0">
      <text x={15} y={20} fontSize={14} fontStyle="italic" fontWeight={700} fill="#1c40b0" textAnchor="middle">f(x)</text>
    </Frame>,
    <Frame key="ci">
      <circle cx={15} cy={14} r={7} fill="none" stroke="#2c78d8" strokeWidth={2.5} />
    </Frame>,
  ];
  const group2 = [
    <Frame key="wv">
      <path d="M4 10l4-3 4 3 4-3 4 3 4-3 2 2" stroke="#e02020" fill="none" strokeWidth={1.5} />
      <path d="M4 19l4-3 4 3 4-3 4 3 4-3 2 2" stroke="#2040e0" fill="none" strokeWidth={1.5} />
    </Frame>,
    <span key="rsi" className="text-[18px] font-bold text-[#2a40c0]">RSI</span>,
    <svg key="s" width={26} height={32} viewBox="0 0 26 32">
      <path d="M13 1L18 7H8Z" fill="#d02020" />
      <text x={13} y={26} fontSize={22} fontWeight={700} fill="#c82020" textAnchor="middle">S</text>
    </svg>,
    <svg key="mv" width={30} height={30} viewBox="0 0 30 30">
      <path d="M15 1L20 7H17V13H23V10L29 15L23 20V17H17V23H20L15 29L10 23H13V17H7V20L1 15L7 10V13H13V7H10Z" fill="#1450c8" />
    </svg>,
    <svg key="pn" width={30} height={30} viewBox="0 0 30 30">
      <path d="M3 27L6 18L21 3L27 9L12 24Z" fill="#f0b030" stroke="#8a6a20" />
      <path d="M21 3L27 9L24 12L18 6Z" fill="#e06060" />
      <path d="M3 27L6 18L12 24Z" fill="#444" />
    </svg>,
  ];
  const nums = ["1", "5", "15", "30", "60"];
  const periods = ["日", "周", "月", "N", "多", "季", "年"];
  return (
    <div className="flex h-full w-[37px] shrink-0 flex-col items-center overflow-hidden border-l border-[#777] bg-[#f0f0f0] text-[16px] text-[#1c5ab0]">
      <div className="-mt-[1px] flex flex-col items-center">
        {group1.map((el, i) => (
          <div key={i} className="flex h-[34.5px] items-center justify-center">
            {el}
          </div>
        ))}
      </div>
      <div className="my-[5.5px] h-[2px] w-[33px] bg-[#b8b8b8]" />
      <div className="flex flex-col items-center">
        {group2.map((el, i) => (
          <div key={i} className="flex h-[34.6px] items-center justify-center">
            {el}
          </div>
        ))}
      </div>
      <div className="mb-[3px] mt-[7px] h-[2px] w-[33px] bg-[#b8b8b8]" />
      <div className="flex h-[33px] items-center justify-center">
        <Frame>
          <text x={15} y={20} fontSize={15} fill="#1c5ad0" textAnchor="middle">F5</text>
        </Frame>
      </div>
      <div className="flex h-[36px] items-center justify-center">
        <Frame>
          <path d="M7 12a9 7 0 0 1 15-2l2-2v7h-7l2-2a5 4 0 0 0-8 0Z" fill="#40b040" />
          <path d="M23 16a9 7 0 0 1-15 2l-2 2v-7h7l-2 2a5 4 0 0 0 8 0Z" fill="#70c070" />
        </Frame>
      </div>
      {nums.map((n) => (
        <div key={n} className="flex h-[34.5px] items-center justify-center">{n}</div>
      ))}
      <div className="h-[2px] w-[33px] bg-[#b8b8b8]" />
      {periods.map((p, i) => (
        <div
          key={p}
          className={`flex h-[34.5px] w-[33px] items-center justify-center ${i === 0 ? "border border-[#aaa] bg-[#fafafa]" : ""}`}
        >
          {p}
        </div>
      ))}
    </div>
  );
}

function StatusBar() {
  const R = "text-[#f40000]";
  const G = "text-[#0a8a10]";
  return (
    <div className="flex h-[36px] shrink-0 items-center whitespace-nowrap border-b-2 border-[#223] bg-[#f0f0f0] pt-[4px] text-[21px] font-bold text-[#222]">
      <svg width={20} height={20} viewBox="0 0 20 20" className="ml-[2px] shrink-0">
        <rect x={0.5} y={0.5} width={19} height={19} rx={3} fill="#f0b860" stroke="#a87820" />
        <rect x={5} y={5} width={10} height={10} fill="#fde8a8" stroke="#c08020" />
      </svg>
      <span className="ml-[3px] w-[54px] text-[24px] font-normal">上证</span>
      <span className={`w-[102px] ${R}`}>3328.39</span>
      <span className={`w-[75px] ${R}`}>17.74</span>
      <span className={`w-[86px] ${R}`}>0.54%</span>
      <span className="w-[94px]">3889<span className="text-[24px] font-normal">亿</span></span>
      <span className="w-[54px] text-[24px] font-normal">深证</span>
      <span className={`w-[108px] ${R}`}>11851.9</span>
      <span className={`w-[69px] ${R}`}>2.41</span>
      <span className={`w-[86px] ${R}`}>0.02%</span>
      <span className="w-[98px]">4806<span className="text-[24px] font-normal">亿</span></span>
      <span className="w-[52px] text-[24px] font-normal">中小</span>
      <span className={`w-[100px] ${G}`}>7733.87</span>
      <span className={`w-[75px] ${G}`}>-5.01</span>
      <span className={`w-[86px] ${G}`}>-0.06%</span>
      <span className="w-[98px]">516.2<span className="text-[24px] font-normal">亿</span></span>
      <span className="h-full w-[4px] border-l border-[#aaa]" />
      <span className="w-[83px] text-[24px] font-normal">总成交</span>
      <span>8699</span>
    </div>
  );
}

function Watermark() {
  return (
    <div className="absolute bottom-0 left-[1360px] flex h-[81px] w-[800px] items-center bg-[#7ea9d6]">
      <span className="ml-[16px] w-[286px] whitespace-nowrap text-[56px] font-black leading-none tracking-[-0.5px] text-[#1a0a90]">
        公式指标网
      </span>
      <svg width={80} height={80} viewBox="0 0 80 80" className="ml-[16px] shrink-0">
        <path d="M4 38A36 36 0 0 1 76 38H66A26 26 0 0 0 14 38Z" fill="#d4604a" />
        <path d="M4 44A36 36 0 0 0 76 44H66A26 26 0 0 1 14 44Z" fill="#e8c84a" />
        <path d="M34 4H46V12H54V34H60V42H50V50H60V58H50V78H42V60H38V78H30V58H20V50H30V42H20V34H26V12H34Z" fill="#e8c84a" />
        <path d="M30 30H50M34 46H46" stroke="#7ea9d6" strokeWidth={3} />
        <path id="wm-arc" d="M7 46A33 33 0 0 0 34 74" fill="none" />
        <text fontSize={7} fill="#fff">
          <textPath href="#wm-arc">www.9m8.cn</textPath>
        </text>
      </svg>
      <span className="ml-[24px] origin-center scale-y-[1.15] whitespace-nowrap text-[52px] font-bold leading-none tracking-[-2px] text-white [font-family:'DejaVu_Serif',serif]">
        www.9m8.cn
      </span>
    </div>
  );
}

export default function App() {
  return (
    <div className="relative flex h-[1395px] w-[2160px] flex-col overflow-hidden bg-black [font-family:'Liberation_Sans','Noto_Sans_CJK_SC',sans-serif]">
      <TopBar />
      <div className="flex min-h-0 flex-1">
        <div className="flex w-[1787px] shrink-0 flex-col">
          <PeriodBar />
          <InfoRow />
          <PriceChart />
          <VolumeChart />
          <DateRow />
          <TabRows />
        </div>
        <RightPanel />
        <ToolColumn />
      </div>
      <StatusBar />
      <Watermark />
    </div>
  );
}
